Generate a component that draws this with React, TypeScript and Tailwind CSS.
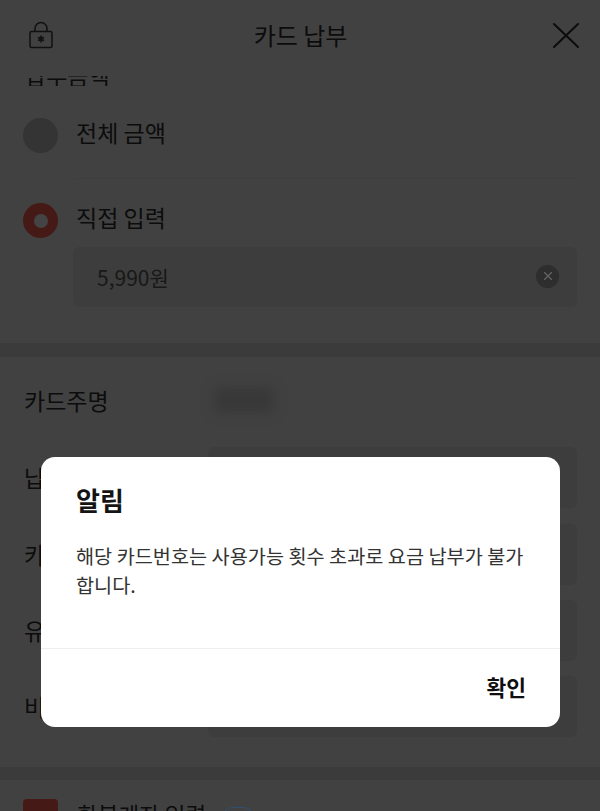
import { X } from "lucide-react";

const font = "font-['Noto_Sans_CJK_KR','Noto_Sans',sans-serif]";

function LockIcon() {
  return (
    <svg width="24" height="28" viewBox="0 0 24 28" fill="none" stroke="#111111" strokeWidth="1.5">
      <path d="M6 11V7.5a6 6 0 0 1 12 0V11" />
      <rect x="1" y="10.5" width="22" height="16" rx="1.5" />
      <path d="M12 14.5v7M9 16.2l6 3.6M15 16.2l-6 3.6" strokeWidth="1.6" />
    </svg>
  );
}

function CloseIcon() {
  return (
    <svg width="28" height="27" viewBox="0 0 28 27" fill="none" stroke="#0c0c0c" strokeWidth="2" strokeLinecap="round">
      <path d="M2 2l24 23M26 2L2 25" />
    </svg>
  );
}

function FormRow({ label, gap = "mb-[15px]" }: { label: string; gap?: string }) {
  return (
    <div className={`flex items-center h-[61px] ${gap}`}>
      <span className="w-[184px] text-[23px] text-[#0c0c0c] leading-none">{label}</span>
      <div className="w-[369px] h-full rounded-md bg-[#3d3d3d]" />
    </div>
  );
}

export default function App() {
  return (
    <div className={`${font} relative h-[811px] overflow-hidden bg-[#414141]`}>
      {/* Header */}
      <div className="flex items-center justify-between h-[70px] pl-[29px] pr-[20px]">
        <LockIcon />
        <h1 className="text-[24px] font-normal text-[#0c0c0c] leading-none -mt-[1px] mr-[4px]">카드 납부</h1>
        <CloseIcon />
      </div>

      {/* Scrolled label, cut by the header */}
      <div className="mt-[6px] h-[10px] overflow-hidden flex items-end pl-[25px]">
        <span className="text-[23px] leading-none text-[#0c0c0c] mb-[-1px] shrink-0">납부금액</span>
      </div>

      {/* Amount */}
      <div className="px-[23px] pt-[32px] pb-[36px]">
        <div className="flex items-center gap-[18px] h-[35px]">
          <span className="w-[35px] h-[35px] rounded-full bg-[#343434]" />
          <span className="text-[23px] leading-none text-[#0c0c0c] -mt-[6px]">전체 금액</span>
        </div>
        <div className="ml-[52px] mt-[25px] h-px bg-[#3e3e3e]" />
        <div className="flex items-center gap-[18px] h-[35px] mt-[24px]">
          <span className="flex items-center justify-center w-[35px] h-[35px] rounded-full bg-[#451a16]">
            <span className="w-[14px] h-[14px] rounded-full bg-[#444444]" />
          </span>
          <span className="text-[23px] leading-none text-[#0c0c0c] -mt-[6px]">직접 입력</span>
        </div>
        <div className="flex items-center justify-between ml-[50px] mt-[9px] h-[60px] rounded-md bg-[#3d3d3d] pl-[24px] pr-[18px]">
          <span className="text-[21px] leading-none text-[#181818]">5,990원</span>
          <span className="flex items-center justify-center w-[23px] h-[23px] rounded-full bg-[#2e2e2e] -mt-[2px]">
            <X size={14} strokeWidth={2} className="text-[#646464]" />
          </span>
        </div>
      </div>

      <div className="h-[14px] bg-[#3b3b3b]" />

      {/* Card form */}
      <div className="pl-[24px] pt-[13px] pb-[15px]">
        <div className="flex items-center h-[60px] mb-[17px]">
          <span className="w-[190px] text-[23px] text-[#0c0c0c] leading-none">카드주명</span>
          <div className="w-[60px] h-[26px] rounded bg-[#383838] blur-[6px]" />
        </div>
        <FormRow label="납부자" gap="mb-[16px]" />
        <FormRow label="카드번호" />
        <FormRow label="유효기간" />
        <FormRow label="비밀번호" />
      </div>

      <div className="h-[13px] bg-[#3b3b3b]" />

      {/* Refund account, cut by the window */}
      <div className="flex items-start pl-[23px] pt-[19px]">
        <span className="w-[35px] h-[35px] rounded bg-[#451a16] shrink-0" />
        <span className="ml-[19px] mt-[4px] text-[22.5px] leading-none text-[#0c0c0c] shrink-0">환불계좌 입력</span>
        <span className="ml-[15px] mt-[8px] w-[34px] h-[24px] rounded-full border-[1.5px] border-[#2f5070] shrink-0" />
      </div>

      {/* Alert */}
      <div className="absolute inset-0 flex justify-center items-start pt-[457px] pl-[1px]">
        <div className="w-[519px] h-[270px] flex flex-col rounded-[14px] bg-white">
          <div className="flex-1 pl-[35px] pr-[34px] pt-[24px]">
            <h2 className="text-[26px] font-bold leading-[38px] text-[#141414]">알림</h2>
            <p className="mt-[22px] text-[19.7px] leading-[29px] text-[#333333]">
              해당 카드번호는 사용가능 횟수 초과로 요금 납부가 불가합니다.
            </p>
          </div>
          <div className="h-px bg-[#eeeeee]" />
          <div className="flex items-center justify-end h-[78px] pr-[34px]">
            <button className="text-[21.5px] font-bold leading-none text-[#0f0f0f] -mt-[2px]">확인</button>
          </div>
        </div>
      </div>
    </div>
  );
}
